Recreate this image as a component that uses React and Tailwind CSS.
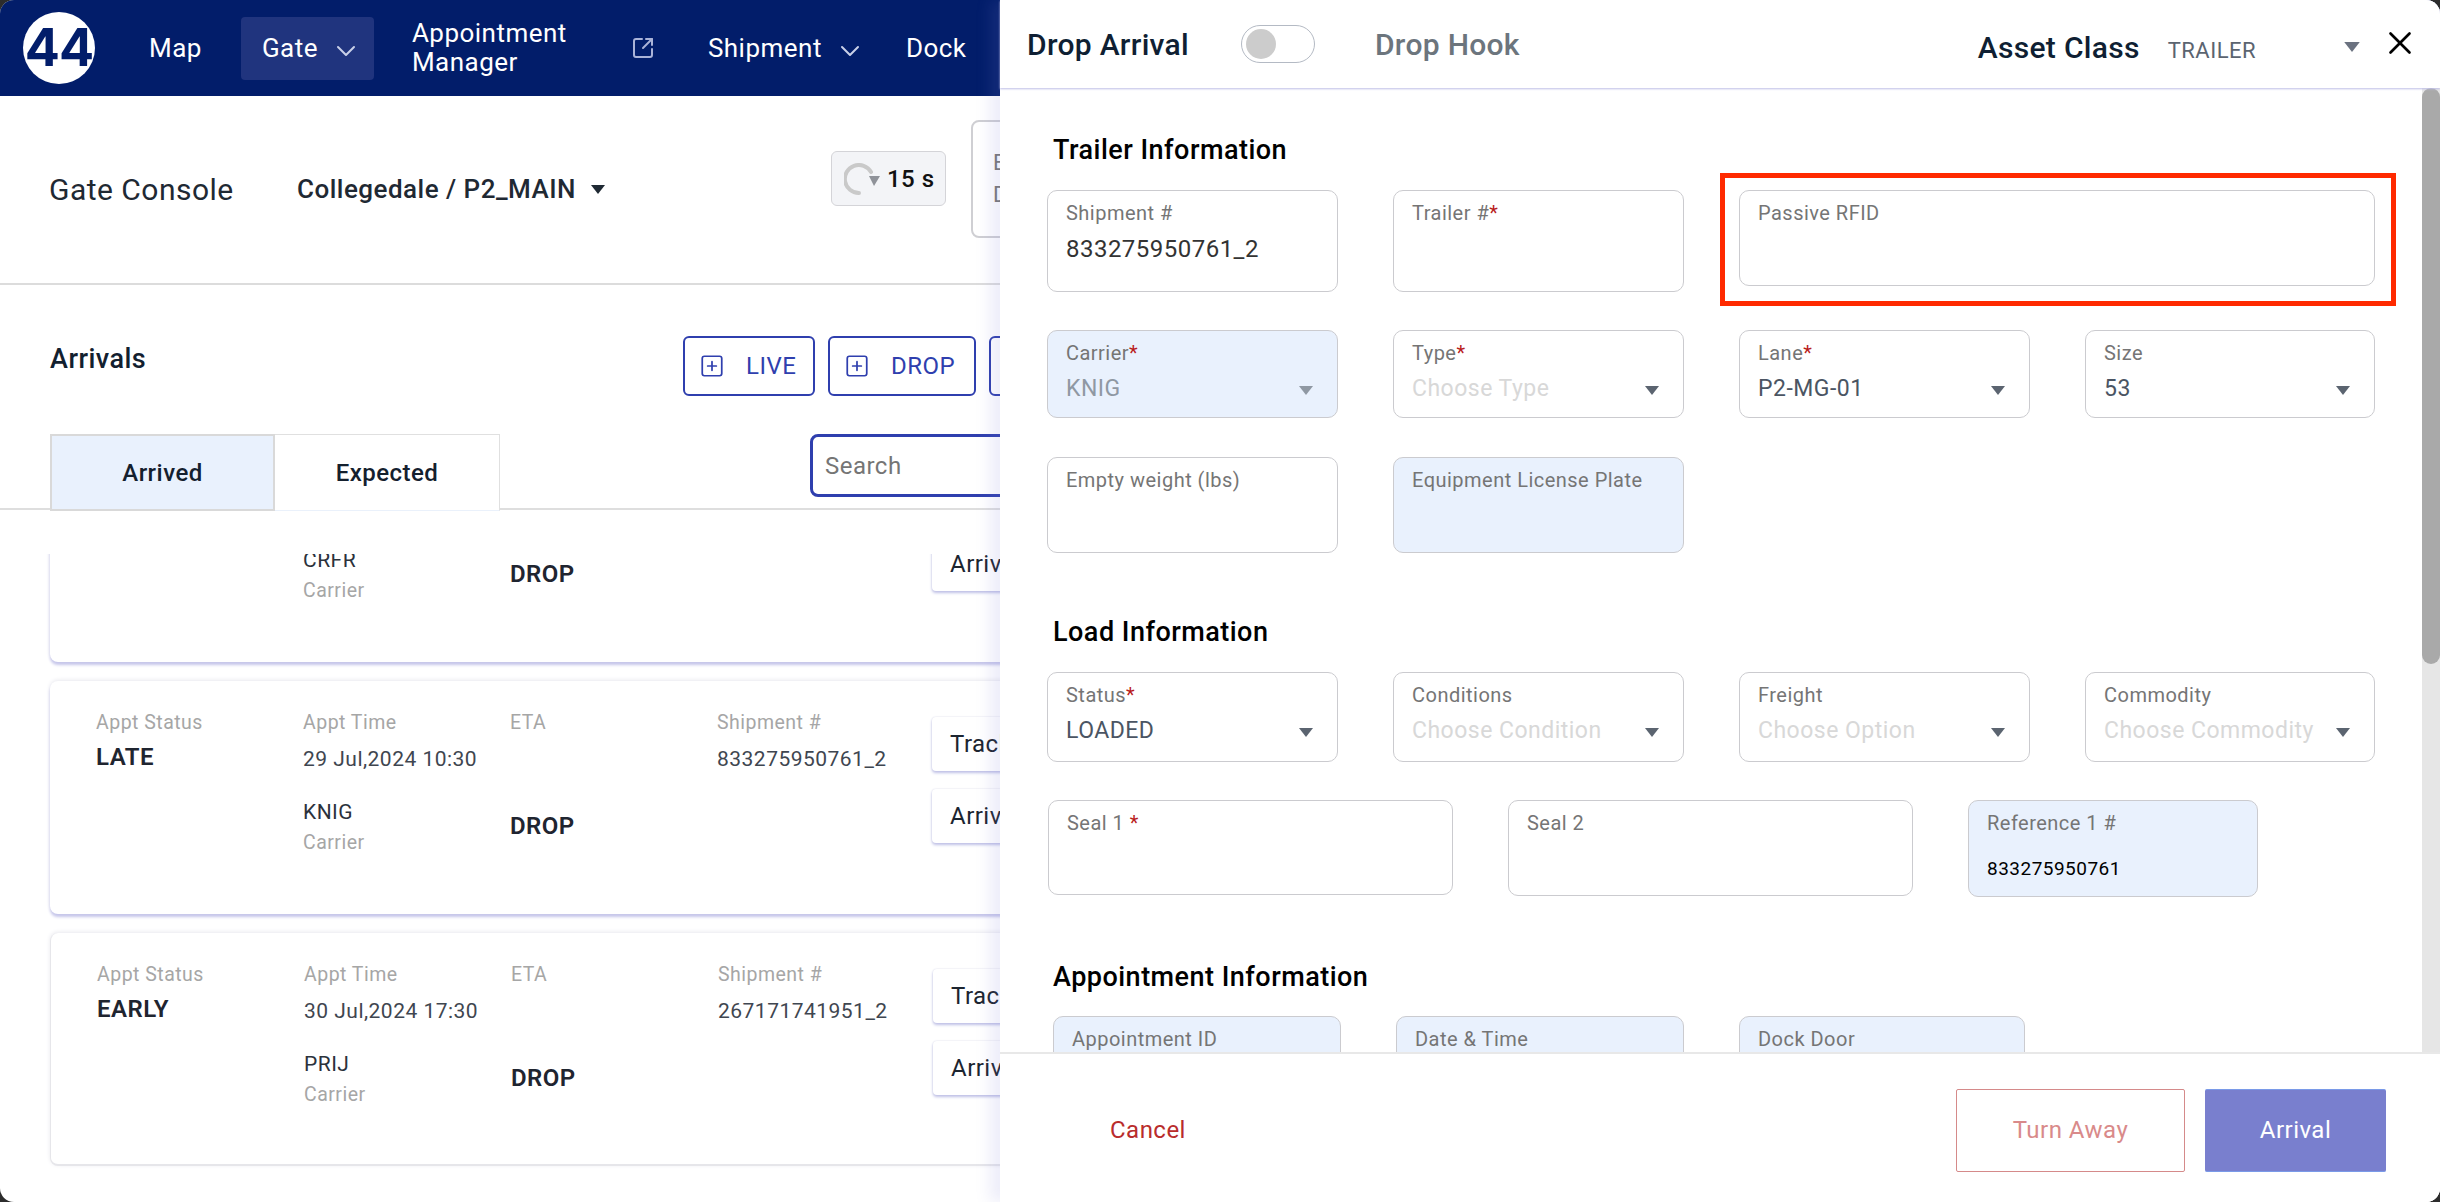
import React from 'react'
import { ChevronDown, SquareArrowOutUpRight, SquarePlus, X } from 'lucide-react'

const cards = [
  { status: '', time: '', shipment: '', carrier: 'CRFR', first: 'Arrival', shadow: true },
  { status: 'LATE', time: '29 Jul,2024 10:30', shipment: '833275950761_2', carrier: 'KNIG', shadow: true },
  { status: 'EARLY', time: '30 Jul,2024 17:30', shipment: '267171741951_2', carrier: 'PRIJ', shadow: false },
]

function Caret({ className = '' }) {
  return (
    <svg viewBox="0 0 14 9" className={`w-[14px] h-[9px] shrink-0 ${className}`}>
      <polygon points="0,0 14,0 7,9" fill="currentColor" />
    </svg>
  )
}

function NavItem({ children, chevron }) {
  return (
    <div className="flex items-center text-[26px] text-white">
      <span>{children}</span>
      {chevron && <ChevronDown size={32} strokeWidth={1.5} className="ml-[12px] mt-[6px] text-[#c9d0e8]" />}
    </div>
  )
}

function ActionButton({ label, className = '' }) {
  return (
    <div className={`flex items-center h-[60px] border-2 border-[#2f3fae] rounded-[6px] pl-[14px] text-[24px] text-[#2f3fae] ${className}`}>
      <SquarePlus size={26} strokeWidth={1.6} />
      <span className="ml-[21px]">{label}</span>
    </div>
  )
}

function CardButton({ label }) {
  return (
    <div className="h-[54px] w-[220px] flex items-center pl-[18px] rounded-[4px] bg-white text-[24px] text-[#1c2530] shadow-[0_2px_3px_#bfc0e6,0_0_2px_#dddde8]">
      {label}
    </div>
  )
}

function Column({ label, children, className = '' }) {
  return (
    <div className={`w-[207px] ${className}`}>
      <div className="h-7 leading-7 text-[19.5px] text-[#a6a6a6]">{label}</div>
      {children}
    </div>
  )
}

function ArrivalCard({ card }) {
  return (
    <div className={`flex w-[2340px] h-[233px] shrink-0 rounded-[8px] bg-white ${card.shadow
      ? 'shadow-[0_3px_3px_#c6c6ea,0_-1px_4px_#e8e8ee]'
      : 'border-b-2 border-l border-[#e6e6ea] shadow-[0_-1px_4px_#e8e8ee]'}`}>
      <div className="w-[882px] pl-[46px] pt-[28px]">
        <div className="flex h-[89px]">
          <Column label="Appt Status">
            <div className="mt-[6px] h-7 leading-7 text-[24px] font-semibold text-[#1f2530]">{card.status}</div>
          </Column>
          <Column label="Appt Time">
            <div className="mt-[8px] h-7 leading-7 text-[21px] text-[#3f4650]">{card.time}</div>
          </Column>
          <Column label="ETA" />
          <Column label="Shipment #">
            <div className="mt-[8px] h-7 leading-7 text-[21px] text-[#3f4650]">{card.shipment}</div>
          </Column>
        </div>
        <div className="flex">
          <div className="w-[207px]" />
          <div className="w-[207px]">
            <div className="h-7 leading-7 text-[21px] text-[#2b323c]">{card.carrier}</div>
            <div className="mt-[3px] h-7 leading-7 text-[19.5px] text-[#a6a6a6]">Carrier</div>
          </div>
          <div className="mt-[14px] h-7 leading-7 text-[24px] font-semibold text-[#1f2530]">DROP</div>
        </div>
      </div>
      <div className="pt-[36px] flex flex-col gap-[18px]">
        <CardButton label="Track" />
        <CardButton label="Arrival" />
      </div>
    </div>
  )
}

function Field({ label, required, value, valueClass = 'text-[23px] text-[#4b5563]', select, blue, className = '', reqGap }) {
  return (
    <div className={`relative shrink-0 border-[1.5px] border-[#cbcbcf] rounded-[10px] pl-[18px] pt-[10px] ${blue ? 'bg-[#e9f1fd]' : 'bg-white'} ${className}`}>
      <div className="h-6 leading-6 text-[20px] text-[#757575] whitespace-nowrap">
        {label}{reqGap ? ' ' : ''}{required && <span className="text-[#b91c1c]">*</span>}
      </div>
      {value && <div className={`mt-[10px] h-7 leading-7 whitespace-nowrap ${valueClass}`}>{value}</div>}
      {select && (
        <div className="absolute right-[24px] top-[55px]">
          <Caret className={blue ? 'text-[#8f98a3]' : 'text-[#5b6470]'} />
        </div>
      )}
    </div>
  )
}

const placeholder = 'text-[23px] text-[#d8d8d8]'

function SectionTitle({ children, className = '' }) {
  return <h2 className={`ml-[6px] h-8 leading-8 text-[27px] font-medium text-black ${className}`}>{children}</h2>
}

export default function App() {
  return (
    <div className="w-[2440px] h-[1202px] bg-[#2c2c2c]">
      <div className="relative w-full h-full overflow-hidden rounded-[14px] bg-white font-[Roboto,sans-serif] tracking-[0.03em]">
        <div className="flex flex-col h-full">
          <nav className="flex items-center h-24 shrink-0 bg-[#021d6a] pl-[23px]">
            <div className="flex items-center justify-center w-[72px] h-[72px] rounded-full bg-white font-[Inter,sans-serif] text-[52px] font-bold text-[#021d6a] tracking-[-0.02em]">
              44
            </div>
            <div className="ml-[54px]"><NavItem>Map</NavItem></div>
            <div className="ml-[39px] flex items-center w-[133px] h-[63px] pl-[21px] rounded-[4px] bg-[#20347e]">
              <NavItem chevron>Gate</NavItem>
            </div>
            <div className="ml-[38px] w-[219px] text-[26px] leading-[29px] text-white">Appointment<br />Manager</div>
            <SquareArrowOutUpRight size={24} strokeWidth={2} className="text-[#aab3d8]" />
            <div className="ml-[53px]"><NavItem chevron>Shipment</NavItem></div>
            <div className="ml-[40px]"><NavItem>Dock</NavItem></div>
          </nav>

          <div className="flex items-center h-[189px] shrink-0 border-b-2 border-[#dcdcdc] pl-[49px]">
            <h1 className="w-[248px] text-[30px] text-[#1f2933]">Gate Console</h1>
            <div className="flex items-center w-[534px]">
              <span className="text-[26px] font-medium text-[#1f2933]">Collegedale / P2_MAIN</span>
              <Caret className="ml-[15px] w-[12px] h-[8px] text-[#1f2933]" />
            </div>
            <div className="flex items-center w-[115px] h-[55px] mb-[22px] pl-[12px] rounded-[6px] border-[1.5px] border-[#d4d4d8] bg-[#f3f4f7]">
              <svg viewBox="0 0 36 32" className="w-[36px] h-[32px]">
                <path d="M27 9 A14 14 0 1 0 15 30" fill="none" stroke="#c9c9c9" strokeWidth="4" strokeLinecap="round" />
                <polygon points="25,13 36,13 30,23" fill="#8f9299" />
              </svg>
              <span className="ml-[7px] text-[24px] font-medium text-[#111]">15 s</span>
            </div>
            <div className="ml-[25px] mb-[22px] w-[200px] h-[118px] flex flex-col justify-center pl-[20px] rounded-[8px] border-2 border-[#cfcfd3] text-[22px] leading-[32px] text-[#777]">
              <span>E</span>
              <span>D</span>
            </div>
          </div>

          <div className="flex items-start shrink-0 pl-[50px] pt-[51px]">
            <h2 className="w-[633px] mt-[7px] h-8 leading-8 text-[27px] font-medium text-[#12202f]">Arrivals</h2>
            <div className="flex gap-[13px]">
              <ActionButton label="LIVE" className="w-[132px]" />
              <ActionButton label="DROP" className="w-[148px]" />
              <div className="w-[160px] h-[60px] border-2 border-[#2f3fae] rounded-[6px]" />
            </div>
          </div>

          <div className="flex items-start h-[76px] mt-[38px] shrink-0 border-b-2 border-[#dedede] pl-[50px]">
            <div className="flex items-center justify-center w-[225px] h-[77px] border-2 border-[#d9d9d9] bg-[#e9f1fd] text-[24px] font-medium text-[#14202e]">Arrived</div>
            <div className="flex items-center justify-center w-[225px] h-[77px] border border-l-0 border-[#e0e0e0] border-b-[#eaf1fb] bg-white text-[24px] font-medium text-[#14202e]">Expected</div>
            <div className="ml-[310px] flex items-center w-[300px] h-[63px] pl-[12px] rounded-[8px] border-[3px] border-[#2f3fae] bg-white text-[24px] text-[#757575]">Search</div>
          </div>

          <div className="mt-[44px] flex-1 min-h-0 overflow-hidden pl-[50px]">
            <div className="flex flex-col gap-[19px] mt-[-125px] pt-[0px]">
              {cards.map((card) => <ArrivalCard key={card.carrier} card={card} />)}
            </div>
          </div>
        </div>

        {/* drawer over the page */}
        <aside className="absolute top-0 bottom-0 right-0 w-[1440px] flex flex-col bg-white shadow-[-10px_0_14px_rgba(130,130,210,0.14)]">
          <header className="relative z-10 flex items-center h-[88px] shrink-0 pl-[27px] pr-[26px] bg-white shadow-[0_1px_2px_#bdbde6]">
            <span className="text-[30px] font-medium text-[#0f1f33] tracking-[0.01em]">Drop Arrival</span>
            <div className="ml-[52px] flex items-center w-[74px] h-[38px] pl-[4px] rounded-full border-[1.5px] border-[#b4bac4] bg-white">
              <div className="w-[30px] h-[30px] rounded-full bg-[#cccccc]" />
            </div>
            <span className="ml-[60px] text-[30px] font-medium text-[#6c757d] tracking-[0.01em]">Drop Hook</span>
            <span className="ml-auto mt-[6px] text-[30px] font-medium text-[#0f1f33] tracking-[0.01em]">Asset Class</span>
            <span className="ml-[28px] mt-[12px] text-[22px] text-[#5b6470]">TRAILER</span>
            <Caret className="ml-[87px] mt-[6px] w-[18px] h-[10px] text-[#6b7280]" />
            <X size={38} strokeWidth={1.7} className="ml-[20px] mt-[-2px] mr-[-5px] text-black" />
          </header>

          <div className="flex flex-1 min-h-0">
            <div className="flex-1 min-w-0 overflow-hidden pl-[47px] pt-[46px]">
              <SectionTitle>Trailer Information</SectionTitle>
              <div className="flex items-start gap-[55px] mt-[24px]">
                <Field label="Shipment #" value="833275950761_2" valueClass="text-[24px] text-[#333]" className="w-[291px] h-[102px]" />
                <Field label="Trailer #" required className="w-[291px] h-[102px]" />
                <Field label="Passive RFID" className="w-[636px] h-[96px]" />
              </div>
              <div className="flex gap-[55px] mt-[38px]">
                <Field label="Carrier" required value="KNIG" valueClass="text-[23px] text-[#8f98a3]" select blue className="w-[291px] h-[88px]" />
                <Field label="Type" required value="Choose Type" valueClass={placeholder} select className="w-[291px] h-[88px]" />
                <Field label="Lane" required value="P2-MG-01" select className="w-[291px] h-[88px]" />
                <Field label="Size" value="53" select className="w-[290px] h-[88px]" />
              </div>
              <div className="flex gap-[55px] mt-[39px]">
                <Field label="Empty weight (lbs)" className="w-[291px] h-[96px]" />
                <Field label="Equipment License Plate" blue className="w-[291px] h-[96px]" />
              </div>

              <SectionTitle className="mt-[63px]">Load Information</SectionTitle>
              <div className="flex gap-[55px] mt-[24px]">
                <Field label="Status" required value="LOADED" select className="w-[291px] h-[90px]" />
                <Field label="Conditions" value="Choose Condition" valueClass={placeholder} select className="w-[291px] h-[90px]" />
                <Field label="Freight" value="Choose Option" valueClass={placeholder} select className="w-[291px] h-[90px]" />
                <Field label="Commodity" value="Choose Commodity" valueClass={placeholder} select className="w-[290px] h-[90px]" />
              </div>
              <div className="flex items-start gap-[55px] mt-[38px] ml-px">
                <Field label="Seal 1" required reqGap className="w-[405px] h-[95px]" />
                <Field label="Seal 2" className="w-[405px] h-[96px]" />
                <Field label="Reference 1 #" value="833275950761" valueClass="text-[19px] text-black !mt-[20px]" blue className="w-[290px] h-[97px]" />
              </div>

              <SectionTitle className="mt-[64px]">Appointment Information</SectionTitle>
              <div className="flex gap-[55px] mt-[23px] ml-[6px]">
                <Field label="Appointment ID" blue className="w-[288px] h-[90px]" />
                <Field label="Date & Time" blue className="w-[288px] h-[90px]" />
                <Field label="Dock Door" blue className="w-[286px] h-[90px]" />
              </div>
            </div>
            <div className="w-[18px] shrink-0 bg-[#e6e6e6]">
              <div className="h-[576px] rounded-full bg-[#a9a9a9]" />
            </div>
          </div>

          <footer className="flex items-center h-[150px] shrink-0 border-t-2 border-[#e8e8e8] pt-[4px] pl-[110px] pr-[54px] bg-white">
            <span className="text-[24px] text-[#b92c2c]">Cancel</span>
            <div className="ml-auto flex items-center justify-center w-[229px] h-[83px] border-[1.5px] border-[#d58a8a] rounded-[2px] text-[24px] text-[#d98a8a]">Turn Away</div>
            <div className="ml-[20px] flex items-center justify-center w-[181px] h-[83px] border-y-[1.5px] border-[#7a9ae8] rounded-[2px] bg-[#797fce] text-[24px] text-white">Arrival</div>
          </footer>

          {/* red annotation around the new field */}
          <div className="absolute left-[720px] top-[173px] w-[676px] h-[133px] border-[5px] border-[#ff2a00] pointer-events-none" />
        </aside>
      </div>
    </div>
  )
}
